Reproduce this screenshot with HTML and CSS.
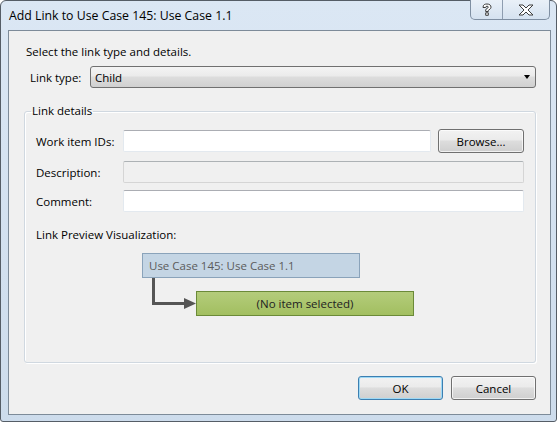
FILE: index.html
```html
<!DOCTYPE html>
<html>
<head>
<meta charset="utf-8">
<link rel="stylesheet" href="styles.css">
</head>
<body>
<div class="window">
  <div class="titlebar">
    <span class="title">Add Link to Use Case 145: Use Case 1.1</span>
    <div class="caption-btns">
      <div class="cap help">
        <svg width="12" height="14" viewBox="0 0 12 14"><path d="M2 4.5 C2 1.5 4 1 6 1 C8.5 1 10 2.2 10 4.2 C10 6 8 6.6 7.3 7.4 L7.3 8.5 L4.7 8.5 L4.7 7 C4.7 5.6 7.3 5.2 7.3 4.2 C7.3 3.5 6.8 3.2 6 3.2 C5.1 3.2 4.7 3.7 4.7 4.5 Z M4.7 9.8 L7.3 9.8 L7.3 12.3 L4.7 12.3 Z" fill="#fff" stroke="#3d3d3d" stroke-width="1"/></svg>
      </div>
      <div class="cap close">
        <svg width="16" height="12" viewBox="0 0 16 12"><path d="M1 1 L5 1 L8 4 L11 1 L15 1 L10 6 L15 11 L11 11 L8 8 L5 11 L1 11 L6 6 Z" fill="#fff" stroke="#3d3d3d" stroke-width="1" stroke-linejoin="round"/></svg>
      </div>
    </div>
  </div>
  <div class="client">
    <div class="intro">Select the link type and details.</div>
    <div class="type-row">
      <span class="type-label">Link type:</span>
      <div class="combo"><span>Child</span><span class="arrow"></span></div>
    </div>
    <fieldset class="group">
      <legend>Link details</legend>
      <div class="row first">
        <span class="lbl">Work item IDs:</span>
        <div class="input"></div>
        <div class="btn browse">Browse...</div>
      </div>
      <div class="row desc">
        <span class="lbl">Description:</span>
        <div class="input disabled"></div>
      </div>
      <div class="row comment">
        <span class="lbl">Comment:</span>
        <div class="input"></div>
      </div>
      <div class="preview-label">Link Preview Visualization:</div>
      <div class="diagram">
        <div class="node parent">Use Case 145: Use Case 1.1</div>
        <div class="child-row">
          <svg class="connector" width="54" height="34" viewBox="0 0 54 34"><path d="M11.5 0 V25.5 H43" fill="none" stroke="#555" stroke-width="3"/><path d="M42 20 L54 25.5 L42 31 Z" fill="#555"/></svg>
          <div class="node child">(No item selected)</div>
        </div>
      </div>
    </fieldset>
    <div class="buttons">
      <div class="btn ok">OK</div>
      <div class="btn">Cancel</div>
    </div>
  </div>
</div>
</body>
</html>
```
FILE: styles.css
```css
html, body {
  margin: 0;
  padding: 0;
  background: #ffffff;
}
body {
  font-family: "Open Sans", "Noto Sans", sans-serif;
  font-size: 11.5px;
  color: #000;
}
.window {
  box-sizing: border-box;
  width: 557px;
  height: 422px;
  border: 1px solid #555d66;
  border-radius: 6px 6px 3px 3px;
  background: linear-gradient(#dbe7f4, #cddcec);
  padding: 0 5px 6px 7px;
  display: flex;
  flex-direction: column;
}
.titlebar {
  height: 29px;
  display: flex;
  align-items: center;
}
.title {
  padding-left: 1px;
  line-height: 16px;
  font-size: 12.3px;
}
.caption-btns {
  margin-left: auto;
  align-self: flex-start;
  display: flex;
  height: 20px;
  margin-top: -1px;
  margin-right: 1px;
  border: 1px solid #7f8fa2;
  border-top: none;
  border-radius: 0 0 5px 5px;
  box-sizing: border-box;
  overflow: hidden;
  background: linear-gradient(#e9f0f8, #d5e2f0);
}
.cap {
  display: flex;
  align-items: center;
  justify-content: center;
}
.help {
  width: 31px;
  border-right: 1px solid #8e9db0;
}
.close {
  width: 46px;
}
.client {
  flex: 1;
  border: 1px solid #7d8b99;
  background: #f0f0f0;
  padding: 13px 14px 14px 15px;
  display: flex;
  flex-direction: column;
}
.intro {
  margin-left: 2px;
  line-height: 16px;
}
.type-row {
  margin-top: 6px;
  display: flex;
  align-items: center;
}
.type-label {
  width: 66px;
  flex: none;
  padding-left: 6px;
  box-sizing: border-box;
}
.combo {
  flex: 1;
  height: 22px;
  box-sizing: border-box;
  border: 1px solid #707070;
  border-radius: 3px;
  background: linear-gradient(#f4f4f4 0%, #ebebeb 45%, #dddddd 50%, #d0d0d0 100%);
  display: flex;
  align-items: center;
  padding: 0 4px 0 4px;
}
.arrow {
  margin-left: auto;
  width: 0;
  height: 0;
  border-left: 3.5px solid transparent;
  border-right: 3.5px solid transparent;
  border-top: 4px solid #000;
  margin-right: 1px;
}
.group {
  flex: 1;
  margin: 15px 0 0 0;
  border: 1px solid #d0d8e0;
  border-radius: 3px;
  box-shadow: inset 1px 1px 0 #fff, 1px 1px 0 #fff;
  padding: 10px 11px 0 11px;
  min-width: 0;
}
.group legend {
  padding: 0 1px;
  margin-left: -5px;
  line-height: 16px;
}
.row {
  display: flex;
  align-items: center;
}
.row.desc { margin-top: 8px; }
.row.comment { margin-top: 7px; }
.lbl {
  width: 87px;
  flex: none;
}
.input {
  flex: 1;
  height: 22px;
  box-sizing: border-box;
  background: #fff;
  border: 1px solid #e3e9ef;
  border-top-color: #abadb3;
  border-radius: 2px;
}
.input.disabled {
  background: #f0f0f0;
  border-color: #d5d5d5;
  border-top-color: #adb2b5;
}
.btn {
  box-sizing: border-box;
  width: 85px;
  height: 24px;
  border: 1px solid #707070;
  border-radius: 3px;
  background: linear-gradient(#f2f2f2 0%, #ebebeb 45%, #dddddd 50%, #cfcfcf 100%);
  box-shadow: inset 0 0 0 1px rgba(255,255,255,0.7);
  display: flex;
  align-items: center;
  justify-content: center;
}
.browse {
  margin-left: 7px;
  width: 86px;
}
.preview-label {
  margin-top: 15px;
  line-height: 16px;
}
.diagram {
  margin-top: 10px;
  margin-left: 106px;
}
.node {
  box-sizing: border-box;
  width: 218px;
  height: 25px;
  display: flex;
  align-items: center;
}
.parent {
  background: #c4d5e4;
  border: 1px solid #8aa3ba;
  color: #5b5b5b;
  padding-left: 6px;
}
.child-row {
  display: flex;
  align-items: flex-start;
}
.connector {
  display: block;
  flex: none;
}
.child {
  margin-top: 13px;
  background: linear-gradient(#b4cc7b, #a2bf60);
  border: 1px solid #6b8a38;
  justify-content: center;
  color: #222;
}
.buttons {
  margin-top: 13px;
  display: flex;
  justify-content: flex-end;
  gap: 8px;
}
.btn.ok {
  border-color: #3c7fb1;
  box-shadow: inset 0 0 0 1px #9fd9f5;
}
```
